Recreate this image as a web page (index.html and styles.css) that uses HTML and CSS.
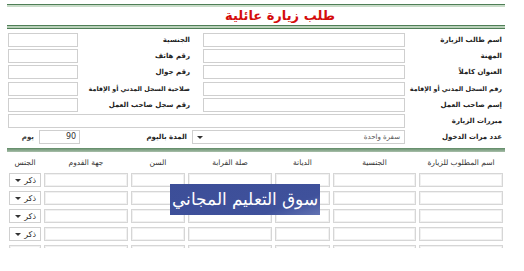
FILE: index.html
```html
<!DOCTYPE html>
<html lang="ar" dir="rtl">
<head>
<meta charset="utf-8">
<link rel="stylesheet" href="styles.css">
</head>
<body>
<div class="page">
  <div class="rule-top"></div>
  <h1 class="title">طلب زيارة عائلية</h1>
  <div class="rule-double"></div>

  <div class="form">
    <label class="lbl">اسم طالب الزيارة</label><input class="fld"><label class="lbl lbl2">الجنسية</label><input class="fld">
    <label class="lbl">المهنة</label><input class="fld"><label class="lbl lbl2">رقم هاتف</label><input class="fld">
    <label class="lbl">العنوان كاملاً</label><input class="fld"><label class="lbl lbl2">رقم جوال</label><input class="fld">
    <label class="lbl lbl-long">رقم السجل المدني أو الإقامة</label><input class="fld"><label class="lbl lbl2 lbl-long">صلاحية السجل المدني أو الإقامة</label><input class="fld">
    <label class="lbl">إسم صاحب العمل</label><input class="fld"><label class="lbl lbl2">رقم سجل صاحب العمل</label><input class="fld">
    <label class="lbl">مبررات الزيارة</label><input class="fld wide">
    <div class="last-row">
      <label class="lbl">عدد مرات الدخول</label>
      <div class="sel sel-trip"><span class="sel-text">سفرة واحدة</span><span class="arrow"></span></div>
      <label class="lbl lbl-days">المدة باليوم</label>
      <div class="fld days">90</div>
      <span class="unit">يوم</span>
    </div>
  </div>

  <div class="bar"></div>

  <div class="grid head">
    <div>اسم المطلوب للزيارة</div>
    <div>الجنسية</div>
    <div>الديانة</div>
    <div>صلة القرابة</div>
    <div>السن</div>
    <div>جهة القدوم</div>
    <div>الجنس</div>
  </div>
  <div class="rows">
    <div class="grid row"><div class="cell"></div><div class="cell"></div><div class="cell"></div><div class="cell"></div><div class="cell"></div><div class="cell"></div><div class="sel sel-g"><span class="sel-text">ذكر</span><span class="arrow"></span></div></div>
    <div class="grid row"><div class="cell"></div><div class="cell"></div><div class="cell"></div><div class="cell"></div><div class="cell"></div><div class="cell"></div><div class="sel sel-g"><span class="sel-text">ذكر</span><span class="arrow"></span></div></div>
    <div class="grid row"><div class="cell"></div><div class="cell"></div><div class="cell"></div><div class="cell"></div><div class="cell"></div><div class="cell"></div><div class="sel sel-g"><span class="sel-text">ذكر</span><span class="arrow"></span></div></div>
    <div class="grid row"><div class="cell"></div><div class="cell"></div><div class="cell"></div><div class="cell"></div><div class="cell"></div><div class="cell"></div><div class="sel sel-g"><span class="sel-text">ذكر</span><span class="arrow"></span></div></div>
    <div class="grid row"><div class="cell"></div><div class="cell"></div><div class="cell"></div><div class="cell"></div><div class="cell"></div><div class="cell"></div><div class="cell"></div></div>
  </div>

  <div class="banner">سوق التعليم المجاني</div>
</div>
</body>
</html>
```

FILE: styles.css
```css
* { box-sizing: border-box; }
html, body { margin: 0; padding: 0; background: #fff; }
body { font-family: "DejaVu Sans", "Noto Sans", sans-serif; color: #222; width: 524px; height: 271px; overflow: hidden; }

.page { position: relative; width: 498px; margin: 0 19px 0 7px; padding-top: 4px; }

.rule-top { height: 3px; border-top: 1px solid #4f7f57; background: #c9dcc9; }
.title { margin: 0; height: 18px; line-height: 18px; font-size: 13px; font-weight: bold; color: #d40d0d; text-align: center; padding-left: 48px; }
.rule-double { height: 4px; border-top: 1px solid #4f7f57; border-bottom: 1px solid #4f7f57; background: #b9d0b9; }

.form { display: grid; grid-template-columns: 100px 202px 125px 70px; grid-auto-rows: 14px; row-gap: 2.2px; margin-top: 4px; }
.lbl { font-family: "DejaVu Sans", sans-serif; font-size: 7px; font-weight: bold; line-height: 14px; color: #222; padding-right: 3px; white-space: nowrap; text-align: right; }
.lbl2 { padding-right: 13px; }
.lbl-long { font-size: 6.4px; }
.fld { height: 14px; border: 1px solid #cfcfcf; background: #fff; margin: 0; padding: 0; font: inherit; }
.wide { grid-column: 2 / 5; }

.last-row { grid-column: 1 / 5; display: flex; align-items: center; }
.last-row > .lbl:first-child { width: 100px; flex: none; }
.sel { height: 14px; border: 1px solid #cfcfcf; background: #fff; display: flex; align-items: center; justify-content: space-between; padding: 0 4px 0 4px; }
.sel-text { font-size: 7px; color: #555; }
.arrow { width: 0; height: 0; border-left: 3px solid transparent; border-right: 3px solid transparent; border-top: 3px solid #333; }
.sel-trip { width: 213px; flex: none; }
.lbl-days { flex: 1; padding-right: 5px; }
.days { width: 41px; flex: none; font-size: 8px; line-height: 12px; color: #333; text-align: left; padding-left: 26px; }
.unit { font-size: 7px; font-weight: bold; color: #333; margin-right: 5px; width: 26px; }

.bar { height: 4px; margin-top: 4px; background: linear-gradient(#5f8a66, #a9bfab); }

.grid { display: grid; grid-template-columns: 84px 83px 55px 84px 54px 84px 32px; column-gap: 3px; padding-right: 2px; }
.head { height: 21px; align-items: center; font-size: 7.5px; color: #333; text-align: center; }
.rows { height: 75px; overflow: hidden; }
.row { height: 14px; margin-bottom: 4px; }
.cell { border: 1px solid #d6d6d6; box-shadow: inset 0 0 0 1px #f1f1f1; background: #fff; }
.sel-g { padding: 0 4px 0 5px; border-color: #d0d0d0; }
.sel-g .sel-text { font-size: 8px; color: #222; }

.banner { position: absolute; left: 163px; top: 184px; width: 150px; height: 31px; background: linear-gradient(160deg, #3c4e98 0%, #3f519b 75%, #6273b3 100%); color: #fff; font-size: 16.5px; font-weight: 200; line-height: 31px; text-align: center; white-space: nowrap; overflow: hidden; }
```
